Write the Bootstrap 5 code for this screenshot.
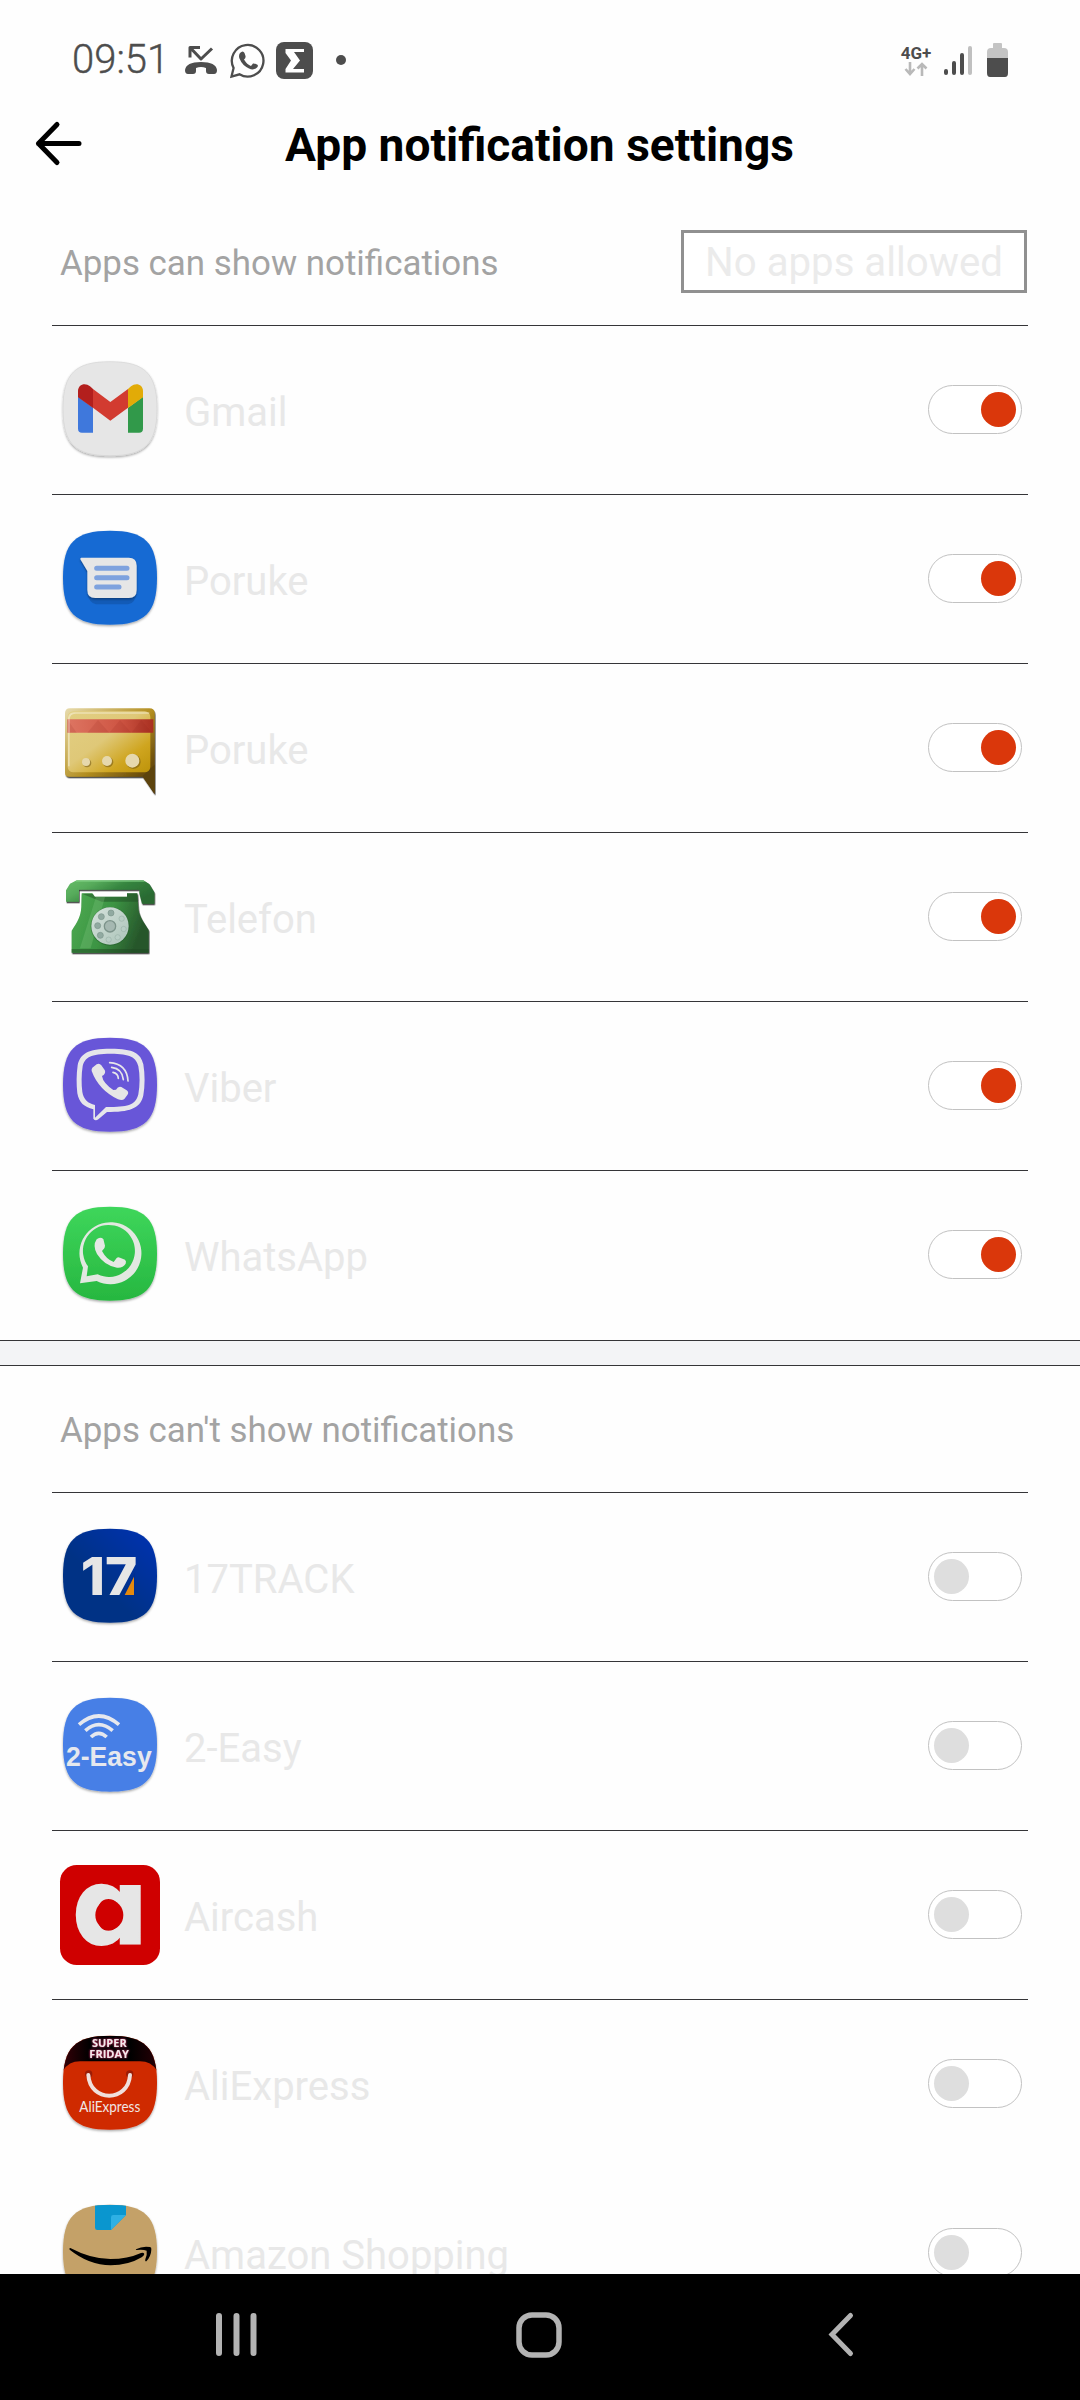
<!DOCTYPE html>
<html lang="en">
<head>
  <meta charset="UTF-8">
  <title>App notification settings</title>
  <meta name="viewport" content="width=device-width, initial-scale=1">
  <link href="https://cdn.jsdelivr.net/npm/bootstrap@5.3.3/dist/css/bootstrap.min.css" rel="stylesheet">
  <style>
    body { height: 2400px; background: #fefefe; font-family: Roboto, "Liberation Sans", sans-serif; line-height: 1.2; }
    svg { display: block; flex: none; overflow: visible; }
    .status { height: 120px; padding: 0 72px 0 72px; color: #4d4d4d; }
    .clock { font-size: 40px; font-weight: 300; width: 113px; -webkit-text-stroke: .4px #4d4d4d; }
    .ic-chat { margin-left: 13px; margin-right: 10px; }
    .ic-dot { margin-left: 23px; }
    .net { width: 30px; font-size: 17px; font-weight: 700; line-height: 18px; }
    .ic-signal { margin-left: 11px; margin-right: 15px; }
    .titlebar { height: 50px; padding-left: 34px; padding-right: 83px; }
    .titlebar h1 { font-size: 46.1px; font-weight: 700; color: #000; padding-top: 1px; }
    .section-head { height: 155px; padding: 60px 53px 32px 60px; font-size: 34.9px; color: #a3a3a3; }
    .section-head span { padding-top: 4px; }
    .section-head.second { height: 126px; padding-top: 0; padding-bottom: 0; }
    .allow-btn { width: 346px; height: 63px; border: 3px solid #909090; border-radius: 0; background: #fff; color: #ebebeb; font-size: 40.2px; line-height: 60px; }
    .app-list { margin: 0 52px; }
    .app-row { height: 169px; padding: 0 6px 0 8px; border-top: 1px solid #353538; }
    .app-row.no-line { border-top-color: transparent; }
    .app-icon { width: 100px; height: 100px; }
    .app-name { margin-left: 24px; padding-top: 5px; font-size: 40px; color: #e8e8e8; }
    .toggle { width: 94px; height: 49px; margin-bottom: 2px; border: 1px solid #c2c2c2; padding: 0 5px; background: #fff; }
    .knob { width: 35px; height: 35px; background: #dedede; }
    .toggle.on .knob { background: #da370b; }
    .band { height: 26px; margin-top: 1px; background: #f3f4f6; border: solid #353538; border-width: 1px 0; }
    .content { height: 2274px; }
    .navkeys { height: 126px; background: #000; padding: 0 0 5px 216px; }
    .key-home { margin-left: 259px; }
    .key-back { margin-left: 266px; }
  </style>
</head>
<body class="overflow-hidden">

  <!-- shared shapes, gradients and shadows -->
  <svg width="0" height="0" class="position-absolute">
    <defs>
      <path id="squircle" d="M150 5C255 5 291 41 291 146S255 287 150 287 9 251 9 146 45 5 150 5Z"/>
      <clipPath id="clip"><use href="#squircle"/></clipPath>
      <filter id="drop" x="-10%" y="-10%" width="120%" height="125%"><feDropShadow dx="0" dy="4" stdDeviation="3" flood-color="#000" flood-opacity=".35"/></filter>
      <filter id="hard" x="-10%" y="-10%" width="125%" height="125%"><feDropShadow dx="2" dy="4" stdDeviation="2" flood-color="#111" flood-opacity=".85"/></filter>
      <filter id="glow" x="-20%" y="-30%" width="140%" height="160%"><feDropShadow dx="0" dy="0" stdDeviation="3" flood-color="#ff2f78" flood-opacity="1"/></filter>
      <linearGradient id="wa" x2="0" y2="1"><stop stop-color="#3ed65b"/><stop offset="1" stop-color="#27b740"/></linearGradient>
      <linearGradient id="navy" x1="0" y1="1" x2="1" y2="0"><stop offset=".4" stop-color="#003285"/><stop offset="1" stop-color="#0033b4"/></linearGradient>
      <linearGradient id="gold" x2="1" y2="1"><stop stop-color="#e2cf83"/><stop offset=".45" stop-color="#dfc878"/><stop offset=".75" stop-color="#cfa51f"/><stop offset="1" stop-color="#bd930a"/></linearGradient>
      <linearGradient id="goldRim" x2="1" y2="1"><stop stop-color="#e8dcae"/><stop offset=".5" stop-color="#b38e20"/><stop offset=".8" stop-color="#6d4f0c"/><stop offset="1" stop-color="#4b350b"/></linearGradient>
      <linearGradient id="stripe" x2="1" y2="0"><stop stop-color="#dd7562"/><stop offset=".6" stop-color="#cf5644"/><stop offset="1" stop-color="#a93021"/></linearGradient>
      <linearGradient id="phone" x2="1" y2=".5"><stop stop-color="#66bd69"/><stop offset=".3" stop-color="#57ab5b"/><stop offset=".6" stop-color="#35853f"/><stop offset="1" stop-color="#2a6b33"/></linearGradient>
      <linearGradient id="phoneBody" x2="1" y2=".3"><stop stop-color="#4dab52"/><stop offset=".55" stop-color="#3c9443"/><stop offset="1" stop-color="#27572b"/></linearGradient>
      <linearGradient id="dial" x2="1" y2="1"><stop stop-color="#d5e2dc"/><stop offset="1" stop-color="#abc3b8"/></linearGradient>
      <linearGradient id="friday" x2="1" y2="0"><stop stop-color="#3a0008"/><stop offset=".3" stop-color="#000"/><stop offset=".7" stop-color="#000"/><stop offset="1" stop-color="#2a0006"/></linearGradient>
    </defs>
  </svg>

  <!-- app icons -->
  <template id="gmail">
    <svg class="app-icon" viewBox="0 0 300 300">
      <use href="#squircle" fill="#e6e6e6" stroke="#d4d4d4" stroke-width="2" filter="url(#drop)"/>
      <path fill="#3f78dc" d="M54 110L99 143V218H66Q54 218 54 206Z"/>
      <path fill="#31994a" d="M204 143L249 110V206Q249 218 237 218H204Z"/>
      <path fill="#d23b30" d="M99 87L151 126L204 87V143L151 182L99 143Z"/>
      <path fill="#b31f1d" d="M54 112V93C54 74 75 66 90 79L99 87V144Z"/>
      <path fill="#e2ab07" d="M249 112V93C249 74 228 66 213 79L204 87V144Z"/>
    </svg>
  </template>

  <template id="messages">
    <svg class="app-icon" viewBox="0 0 300 300">
      <use href="#squircle" fill="#186ad3" filter="url(#drop)"/>
      <path fill="#0b3f84" opacity=".35" d="M82 132L62 96V88L230 180V190Q226 225 204 226H108Q86 222 82 190Z"/>
      <path fill="#e6e6e6" filter="url(#drop)" d="M64 86H206Q230 86 230 110V183Q230 207 206 207H106Q82 207 82 183V126L61 91Q60 86 64 86Z"/>
      <path stroke="#7ea2de" stroke-width="15" stroke-linecap="round" d="M110 118H201M110 146H201M110 174H177"/>
    </svg>
  </template>

  <template id="sms">
    <svg class="app-icon" viewBox="0 0 300 300">
      <path fill="url(#goldRim)" filter="url(#hard)" d="M30 31H268Q284 31 284 47V289L248 236H28Q15 236 15 224V47Q15 31 30 31Z"/>
      <path fill="#5c430d" d="M248 234L284 200V287Z"/>
      <rect x="23" y="40" width="248" height="183" rx="17" fill="url(#gold)"/>
      <path fill="#fff" opacity=".4" d="M42 43H268V47H46Q30 48 29 64V205H24V60Q26 44 42 43Z"/>
      <path fill="url(#stripe)" d="M22 64H280V104H22Z"/>
      <path fill="#8a2118" opacity=".13" d="M22 64L50 104L82 104L114 66L148 104L180 66L214 104L244 66L276 104H22Z"/>
      <path fill="#fff" opacity=".3" d="M24 64H30V104H24Z"/>
      <g fill="#6b5010" opacity=".5"><circle cx="81" cy="195" r="13"/><circle cx="144" cy="192" r="16"/><circle cx="220" cy="191" r="22"/></g>
      <g fill="#e6d8ac"><circle cx="78" cy="192" r="12"/><circle cx="141" cy="189" r="15"/><circle cx="217" cy="188" r="21"/></g>
    </svg>
  </template>

  <template id="phoneapp">
    <svg class="app-icon" viewBox="0 0 300 300">
      <path fill="url(#phoneBody)" filter="url(#hard)" d="M65 79H97L104 89H201V79H232L235 125C238 150 255 170 266 189V257H35V191C52 165 62 150 64 120Z"/>
      <path fill="#1d4722" opacity=".45" d="M66 80H97L104 89H201V79H232L234 104H125Z"/>
      <path fill="#1d4722" opacity=".5" d="M35 246H266V257H35Z"/>
      <path fill="#8fd08c" opacity=".25" d="M108 90H135L92 244H60Z"/>
      <path fill="url(#phone)" filter="url(#hard)" d="M50 40H250L268 51L283 76V110H246L238 79V68H57V104H18V70L30 50Z"/>
      <path fill="#7fd083" opacity=".6" d="M50 40H250L256 45H46Z"/>
      <circle cx="150" cy="178" r="58" fill="#1e5526" opacity=".5"/>
      <circle cx="150" cy="177" r="56" fill="url(#dial)"/>
      <g fill="#91aaa1" stroke="#7b958b" stroke-width="2">
        <circle cx="153" cy="138" r="9"/><circle cx="124" cy="149" r="9"/><circle cx="113" cy="176" r="9"/><circle cx="121" cy="205" r="9"/>
      </g>
      <g fill="#b9cec5" stroke="#9bb3a9" stroke-width="2">
        <circle cx="146" cy="218" r="8"/><circle cx="173" cy="211" r="8"/><circle cx="191" cy="186" r="8"/><circle cx="185" cy="155" r="8"/>
      </g>
      <circle cx="150" cy="178" r="17" fill="#a5b8b1" stroke="#7c938a" stroke-width="4"/>
    </svg>
  </template>

  <template id="viber">
    <svg class="app-icon" viewBox="0 0 300 300">
      <use href="#squircle" fill="#6757d8" filter="url(#drop)"/>
      <path fill="#e6e6ea" fill-rule="evenodd" d="M152 38C222 38 242 52 250 85C255 115 255 150 250 178C243 212 217 228 152 228H141L115 250Q106 257 100 248V220C72 213 57 200 52 172C49 145 49 115 53 88C60 54 82 38 152 38ZM152 53C92 53 74 64 68 91C64 115 64 145 67 168C71 191 84 202 105 207V245L138 213H152C209 213 228 204 235 175C240 148 240 117 235 91C229 64 211 53 152 53Z"/>
      <path fill="#e6e6e6" d="M97 95L110 85Q118 80 124 88L134 102Q138 110 131 117L126 120Q129 141 160 162L168 161Q175 149 184 153L200 163Q208 169 202 177L193 189Q187 195 174 190Q116 162 95 105Q94 99 97 95Z"/>
      <g fill="none" stroke="#e6e6ea" stroke-width="5" stroke-linecap="round"><path d="M149 80Q201 84 204 135"/><path d="M155 94Q187 98 190 131"/><path d="M159 109Q174 112 175 127"/></g>
    </svg>
  </template>

  <template id="whatsapp">
    <svg class="app-icon" viewBox="0 0 300 300">
      <use href="#squircle" fill="url(#wa)" filter="url(#drop)"/>
      <path fill="#e2e8e1" fill-rule="evenodd" d="M60 235L69 188A93 93 0 1 1 110 228ZM80 214L113 208A78 78 0 1 0 84 184Z"/>
      <path fill="#e6e8e5" d="M110 103Q120 94 130 102L135 122Q136 130 126 138Q139 163 161 171L170 159Q174 155 180 158L195 164Q200 168 197 176Q188 190 171 188Q133 182 111 147Q97 122 110 103Z"/>
    </svg>
  </template>

  <template id="track">
    <svg class="app-icon" viewBox="0 0 300 300">
      <use href="#squircle" fill="url(#navy)" filter="url(#drop)"/>
      <text x="62" y="204" font-family="Inter, Roboto, sans-serif" font-weight="800" font-size="157" fill="#e6e6e6" textLength="170" lengthAdjust="spacingAndGlyphs">17</text>
      <path fill="#002f90" d="M224 137L189 206H225V137Z"/>
      <path fill="#e58a0d" d="M222 149V204H194Z"/>
    </svg>
  </template>

  <template id="easy">
    <svg class="app-icon" viewBox="0 0 300 300">
      <use href="#squircle" fill="#477fe6" filter="url(#drop)"/>
      <g fill="none" stroke="#e6e8ee" stroke-width="11"><path d="M57 86Q116 34 177 86"/><path d="M76 104Q116 68 158 104"/><path d="M93 123Q116 101 140 123"/></g>
      <text x="18" y="210" font-family="Liberation Sans, sans-serif" font-weight="700" font-size="85" fill="#e6e8ee" textLength="257" lengthAdjust="spacingAndGlyphs">2-Easy</text>
    </svg>
  </template>

  <template id="aircash">
    <svg class="app-icon" viewBox="0 0 300 300">
      <rect width="300" height="300" rx="50" fill="#cf0000"/>
      <text x="36" y="238" font-family="DejaVu Sans, sans-serif" font-weight="700" font-size="316" fill="#e6e6e6" stroke="#e6e6e6" stroke-width="6" textLength="230" lengthAdjust="spacingAndGlyphs">ɑ</text>
      <ellipse cx="148" cy="150" rx="42" ry="45" fill="#cf0000"/>
    </svg>
  </template>

  <template id="ali">
    <svg class="app-icon" viewBox="0 0 300 300">
      <use href="#squircle" fill="#cf2905" filter="url(#drop)"/>
      <path clip-path="url(#clip)" fill="url(#friday)" d="M0 0H300V130Q284 82 240 82H60Q16 82 0 130Z"/>
      <g font-family="Open Sans, sans-serif" font-weight="700" font-size="34" fill="#f6e6ec" filter="url(#glow)">
        <text x="96" y="40" textLength="104" lengthAdjust="spacingAndGlyphs">SUPER</text>
        <text x="88" y="72" textLength="119" lengthAdjust="spacingAndGlyphs">FRIDAY</text>
      </g>
      <g fill="#9c1c05"><circle cx="86" cy="120" r="11"/><circle cx="209" cy="120" r="11"/></g>
      <path fill="none" stroke="#f0e0dc" stroke-width="12" stroke-linecap="round" d="M85 123C90 206 205 206 210 123"/>
      <text x="58" y="235" font-family="Lato, sans-serif" font-size="43" fill="#f0e6e4" textLength="183" lengthAdjust="spacingAndGlyphs">AliExpress</text>
    </svg>
  </template>

  <template id="amazon">
    <svg class="app-icon" viewBox="0 0 300 300">
      <use href="#squircle" fill="#c4a167" filter="url(#drop)"/>
      <g clip-path="url(#clip)"><path fill="#0a96cf" d="M105 0H198V36L153 81H112Q105 81 105 74Z"/></g>
      <path fill="#2fb0e4" d="M153 81V43Q153 36 160 36H198Z"/>
      <path d="M31 135Q93 168 151 168Q203 168 243 150Q251 148 253 153Q252 158 245 163Q205 187 152 187Q87 186 29 140Q26 135 31 135Z"/>
      <path d="M228 139Q247 128 270 132Q275 133 274 140Q273 160 259 175Q254 176 256 169Q262 155 260 143Q250 139 230 141Q226 141 228 139Z"/>
    </svg>
  </template>

  <div class="content overflow-hidden">
    <!-- status bar -->
    <div class="status d-flex align-items-center">
      <div class="clock">09:51</div>
      <svg width="32" height="30" viewBox="0 0 32 30" fill="none" stroke="#4d4d4d" stroke-width="3">
        <path d="M15 2.500H5V12.500M5.500 3L16 14L27 3.500" stroke-linejoin="round"/>
        <path fill="#4d4d4d" stroke="none" d="M0 25Q1 17 16 17T32 25Q32 29 29 29H24Q21 29 21 26V23Q16 21 11 23V26Q11 29 8 29H3Q0 29 0 25Z"/>
      </svg>
      <svg width="36" height="36" viewBox="0 0 36 36" class="ic-chat">
        <path fill="none" stroke="#4d4d4d" stroke-width="2.300" d="M1.500 34.500L3.600 26A15.800 15.800 0 1 1 9.500 32.300Z"/>
        <path fill="#4d4d4d" d="M10 11Q13 8 14.500 11L15.500 14Q16 16 14 17.500Q17 22.500 21 24L23 21.500Q24 21 27 22.500Q28.500 23 27.500 25Q24 29 19 26.500Q12 23 10 17.500Q8 14 10 11Z"/>
      </svg>
      <svg width="37" height="37" viewBox="0 0 37 37">
        <rect width="37" height="37" rx="8" fill="#4d4d4d"/>
        <path fill="#fff" d="M9.500 7H28V10H18L24 18.500L17 27H28V30.500H9.500V27L15 18.500L9.500 11Z"/>
      </svg>
      <svg width="10" height="10" viewBox="0 0 10 10" class="ic-dot"><circle cx="5" cy="5" r="5" fill="#4d4d4d"/></svg>

      <div class="net ms-auto d-flex flex-column align-items-center">
        <span>4G+</span>
        <svg width="24" height="14" viewBox="0 0 24 14" fill="none" stroke="#b9b9b9" stroke-width="2.600"><path d="M6 0V12M1.500 7L6 12L10.500 7M18 14V2M13.500 6.500L18 2L22.500 6.500"/></svg>
      </div>
      <svg width="30" height="32" viewBox="0 0 30 32" class="ic-signal" stroke-width="4" stroke-linecap="round" stroke="#4d4d4d">
        <path d="M4 27V29M12 19V29M20 11V29"/><path stroke="#c0c0c0" d="M28 4V29"/>
      </svg>
      <svg width="21" height="34" viewBox="0 0 21 34">
        <path fill="#c4c4c4" d="M6 1Q6 0 7 0H14Q15 0 15 1V5H17Q21 5 21 9V16H0V9Q0 5 4 5H6Z"/>
        <path fill="#4d4d4d" d="M0 15H21V30Q21 34 18 34H3Q0 34 0 30Z"/>
      </svg>
    </div>

    <!-- title -->
    <div class="titlebar d-flex align-items-center">
      <svg width="48" height="46" viewBox="0 0 48 46" fill="none" stroke="#000" stroke-width="5" stroke-linecap="round" stroke-linejoin="round"><path d="M23 2.500L4.500 21.500L23 40.500M4.500 21.500H45"/></svg>
      <h1 class="mb-0 flex-grow-1 text-center text-nowrap">App notification settings</h1>
    </div>

    <div class="section-head d-flex align-items-center justify-content-between">
      <span>Apps can show notifications</span>
      <button type="button" class="allow-btn text-nowrap p-0">No apps allowed</button>
    </div>
    <div class="app-list" id="allowed-list"></div>

    <div class="band"></div>

    <div class="section-head second d-flex align-items-center">
      <span>Apps can't show notifications</span>
    </div>
    <div class="app-list" id="blocked-list"></div>
  </div>

  <!-- navigation keys -->
  <div class="navkeys d-flex align-items-center">
    <svg width="41" height="43" viewBox="0 0 41 43" stroke="#b3b3b3" stroke-width="6" stroke-linecap="round"><path d="M3 3V40M20.500 3V40M37.500 3V40"/></svg>
    <svg width="46" height="46" viewBox="0 0 46 46" class="key-home" fill="none" stroke="#b3b3b3" stroke-width="5.500"><rect x="3" y="3" width="40" height="40" rx="13"/></svg>
    <svg width="26" height="43" viewBox="0 0 26 43" class="key-back" fill="none" stroke="#b3b3b3" stroke-width="5" stroke-linecap="round"><path d="M22.500 2.500L4 21.500L22.500 40.500"/></svg>
  </div>

  <script src="https://cdn.jsdelivr.net/npm/bootstrap@5.3.3/dist/js/bootstrap.bundle.min.js"></script>
  <script>
    const allowed = [
      { name: "Gmail", icon: "gmail" },
      { name: "Poruke", icon: "messages" },
      { name: "Poruke", icon: "sms" },
      { name: "Telefon", icon: "phoneapp" },
      { name: "Viber", icon: "viber" },
      { name: "WhatsApp", icon: "whatsapp" }
    ];
    const blocked = [
      { name: "17TRACK", icon: "track" },
      { name: "2-Easy", icon: "easy" },
      { name: "Aircash", icon: "aircash" },
      { name: "AliExpress", icon: "ali" },
      { name: "Amazon Shopping", icon: "amazon", noLine: true }
    ];

    function renderList(id, apps, on) {
      document.getElementById(id).innerHTML = apps.map(app => `
        <div class="app-row d-flex align-items-center ${app.noLine ? "no-line" : ""}">
          ${document.getElementById(app.icon).innerHTML}
          <span class="app-name text-nowrap">${app.name}</span>
          <div class="toggle rounded-pill ms-auto d-flex align-items-center ${on ? "on justify-content-end" : ""}">
            <span class="knob rounded-circle"></span>
          </div>
        </div>
      `).join("");
    }

    renderList("allowed-list", allowed, true);
    renderList("blocked-list", blocked, false);
  </script>
</body>
</html>
